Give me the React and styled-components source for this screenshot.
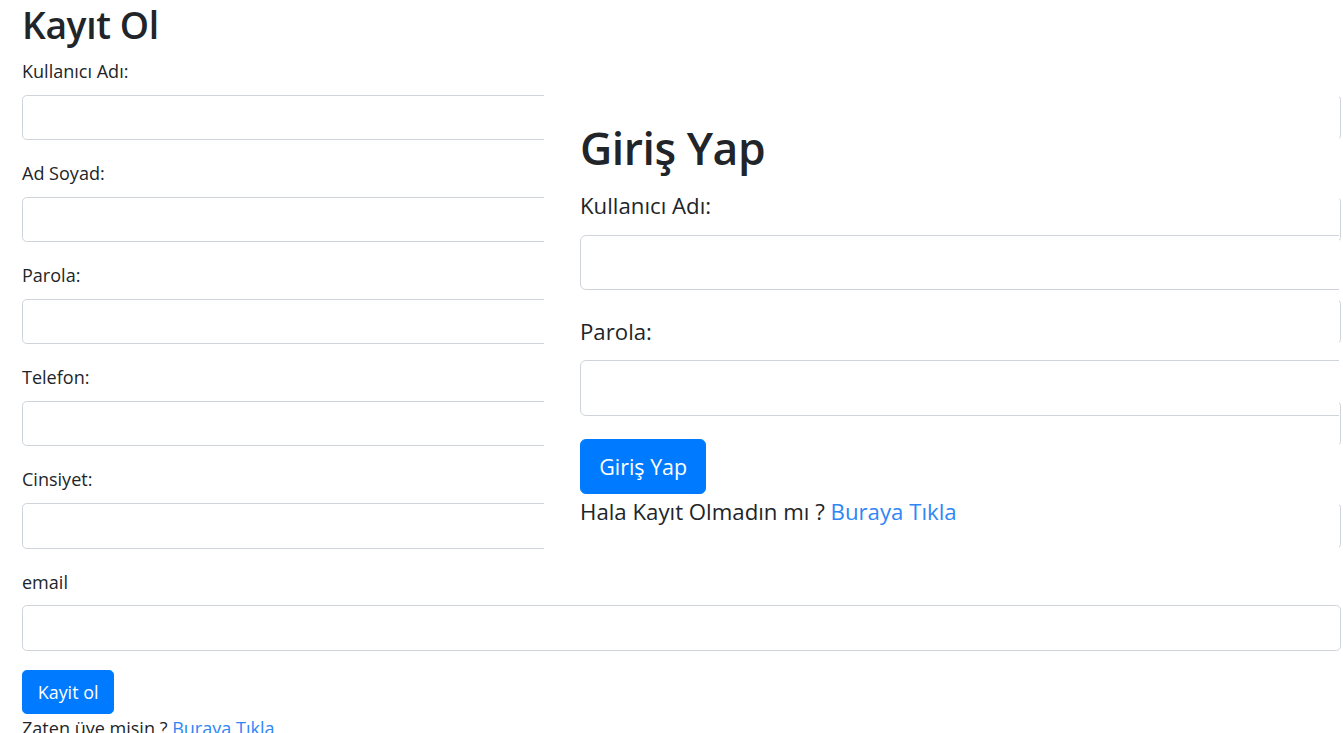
import React from "react";
import styled, { createGlobalStyle } from "styled-components";

const GlobalStyle = createGlobalStyle`
  html, body {
    margin: 0;
    padding: 0;
    overflow: hidden;
    background: #fff;
  }
  body {
    font-family: "Open Sans", "Noto Sans", sans-serif;
    color: #212529;
  }
  * { box-sizing: border-box; }
`;

const Page = styled.div`
  position: relative;
  padding: 2px 2px 0 22px;
  font-size: 19px;
  line-height: 1.5;
  height: 733px;
`;

const Title = styled.h2`
  font-size: ${(p) => (p.$big ? "1.9em" : "1.96em")};
  font-weight: 600;
  line-height: ${(p) => (p.$big ? 1.263 : 1.224)};
  margin: 0 0 ${(p) => (p.$big ? "0.263em" : "0.255em")};
  letter-spacing: -0.01em;
`;

const Group = styled.div`
  margin-bottom: 1em;
`;

const Label = styled.label`
  display: block;
  margin-bottom: 0.5263em;
  font-size: 0.95em;
  line-height: 1.579;
`;

const Input = styled.input`
  display: block;
  width: 100%;
  height: 2.375em;
  padding: 0.375em 0.75em;
  font: inherit;
  color: #495057;
  background: #fff;
  border: 1px solid #ced4da;
  border-radius: 0.25em;
  outline: none;
`;

const Button = styled.button`
  display: inline-block;
  font-family: inherit;
  font-size: 1em;
  line-height: 1.5;
  padding: 0.375em 0.78em;
  color: #fff;
  background: #007bff;
  border: 1px solid #007bff;
  border-radius: 0.25em;
  cursor: pointer;
  & > span {
    font-size: ${(p) => (p.$tight ? "0.915em" : "0.94em")};
  }
`;

const Note = styled.div`
  font-size: 0.95em;
  line-height: 1.579;
`;

const Link = styled.a`
  color: #2f86f6;
  text-decoration: none;
`;

const Overlay = styled.div`
  position: absolute;
  left: 544px;
  top: 90px;
  width: 795px;
  height: 465px;
  background: #fff;
  overflow: hidden;
  padding: 30px 0 0 36px;
  font-size: 23.4px;
  line-height: 1.5;
`;

const LoginForm = styled.form`
  width: 830px;
`;

const Form = styled.form``;

const fields = ["Kullanıcı Adı:", "Ad Soyad:", "Parola:", "Telefon:", "Cinsiyet:", "email"];

export default function App() {
  return (
    <>
      <GlobalStyle />
      <Page>
        <Title>Kayıt Ol</Title>
        <Form onSubmit={(e) => e.preventDefault()}>
          {fields.map((f) => (
            <Group key={f}>
              <Label>{f}</Label>
              <Input type="text" />
            </Group>
          ))}
          <Button type="submit"><span>Kayit ol</span></Button>
          <Note>
            Zaten üye misin ? <Link href="#">Buraya Tıkla</Link>
          </Note>
        </Form>
        <Overlay>
          <Title $big>Giriş Yap</Title>
          <LoginForm onSubmit={(e) => e.preventDefault()}>
            <Group>
              <Label>Kullanıcı Adı:</Label>
              <Input type="text" />
            </Group>
            <Group>
              <Label>Parola:</Label>
              <Input type="password" />
            </Group>
            <Button type="submit" $tight><span>Giriş Yap</span></Button>
            <Note>
              Hala Kayıt Olmadın mı ? <Link href="#">Buraya Tıkla</Link>
            </Note>
          </LoginForm>
        </Overlay>
      </Page>
    </>
  );
}
